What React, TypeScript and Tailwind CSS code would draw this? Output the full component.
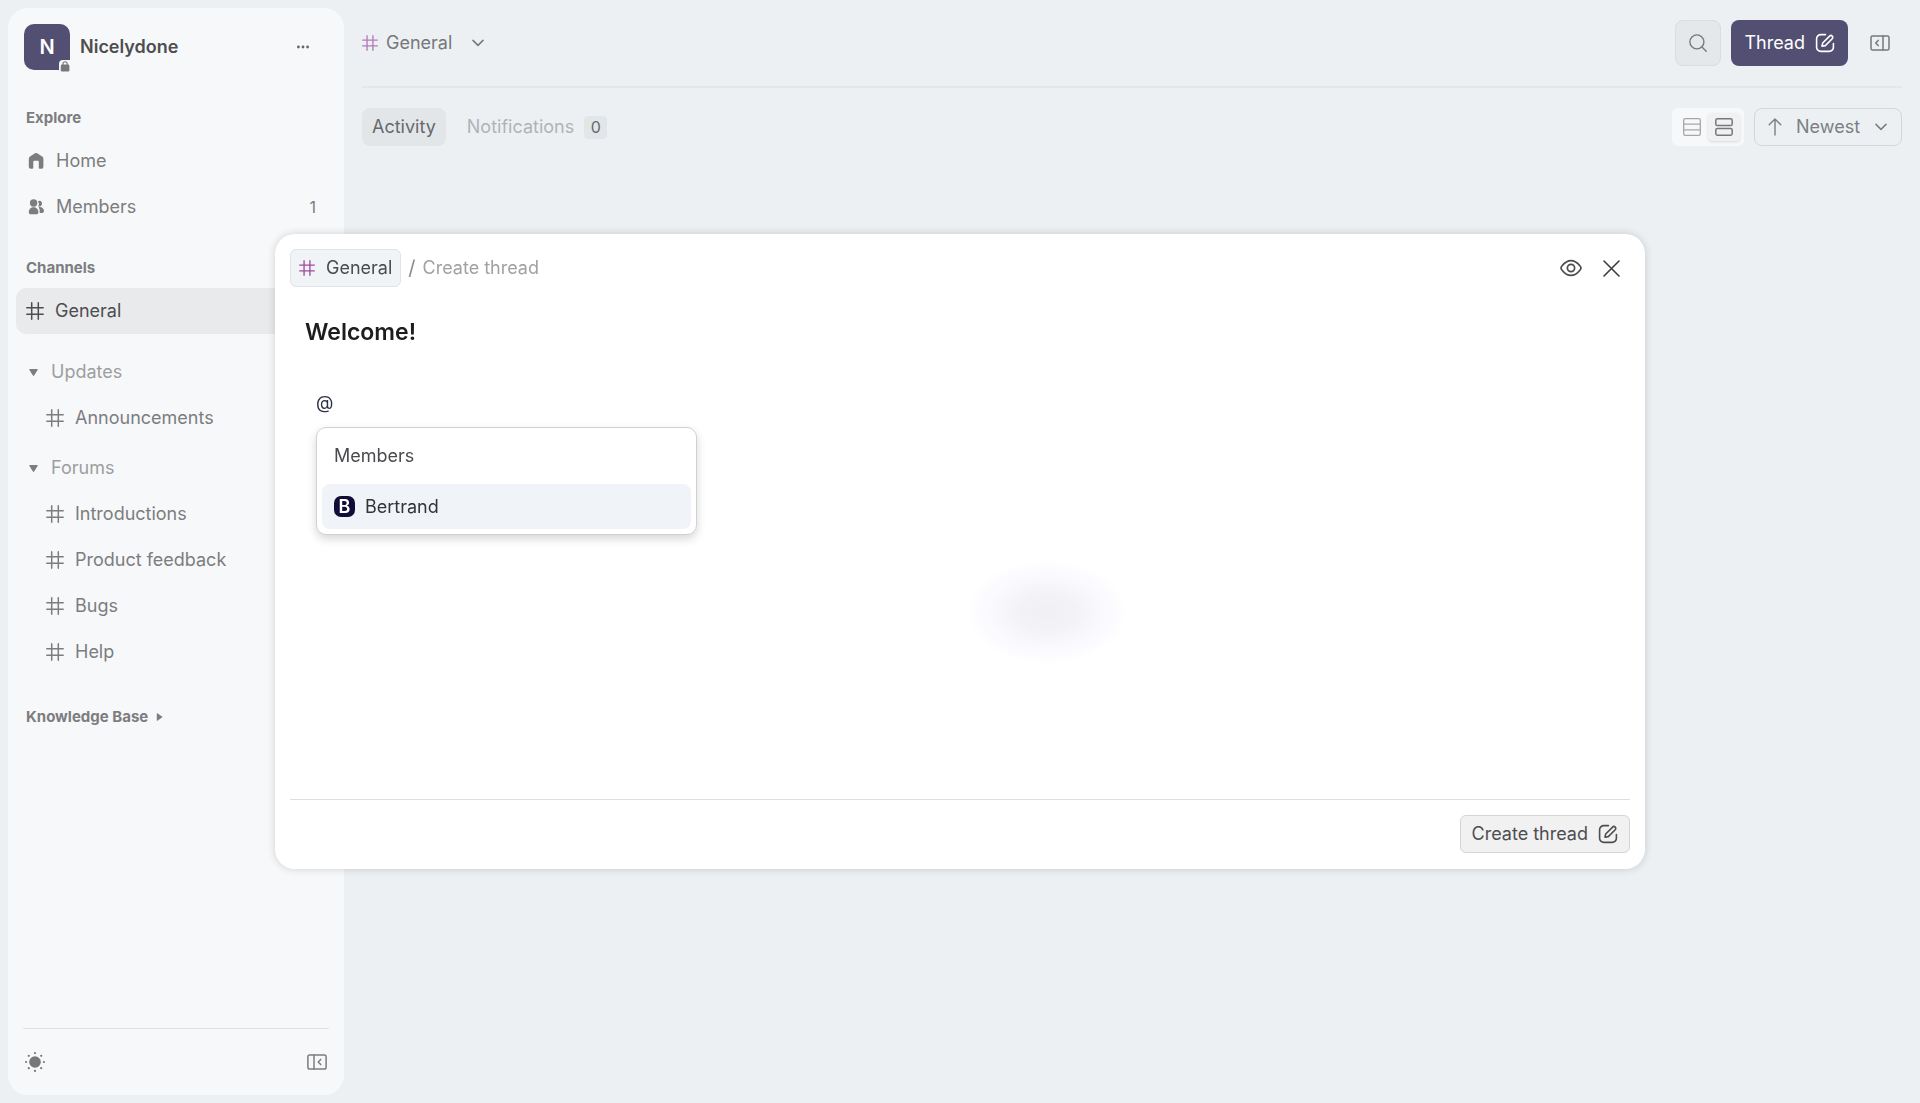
import React, { useState } from 'react';

interface IconProps {
  className?: string;
}

interface ChannelGroup {
  name: string;
  channels: string[];
}

const groups: ChannelGroup[] = [
  { name: 'Updates', channels: ['Announcements'] },
  { name: 'Forums', channels: ['Introductions', 'Product feedback', 'Bugs', 'Help'] },
];

const HashIcon: React.FC<IconProps> = ({ className = '' }) => (
  <svg viewBox="0 0 18 18" fill="none" stroke="currentColor" strokeWidth="1.5" strokeLinecap="round" className={`shrink-0 ${className}`} aria-hidden="true">
    <path d="M5.7 .8v16.4M12.3 .8v16.4M.8 5.7h16.4M.8 12.3h16.4" />
  </svg>
);

const EditIcon: React.FC<IconProps> = ({ className = '' }) => (
  <svg viewBox="0 0 20 20" fill="none" stroke="currentColor" strokeWidth="1.6" strokeLinecap="round" strokeLinejoin="round" className={`size-5 shrink-0 ${className}`} aria-hidden="true">
    <path d="M10.500 1.600H5.800a4.200 4.200 0 0 0-4.200 4.200v8.400a4.200 4.200 0 0 0 4.200 4.200h8.400a4.200 4.200 0 0 0 4.200-4.200v-3.700" />
    <path d="M7 13.200l.7-3.200 6.900-6.900a1.800 1.800 0 0 1 2.600 2.600l-6.900 6.900z" />
  </svg>
);

const PanelLeftIcon: React.FC<IconProps> = ({ className = '' }) => (
  <svg viewBox="0 0 20 16" fill="none" stroke="currentColor" strokeWidth="1.5" strokeLinecap="round" strokeLinejoin="round" className={`h-4 w-5 shrink-0 ${className}`} aria-hidden="true">
    <rect x=".9" y=".9" width="18.2" height="14.2" rx="1.8" />
    <path d="M7 1v14M13.7 5.4l-2.5 2.6 2.5 2.6" />
  </svg>
);

const PanelRightIcon: React.FC<IconProps> = ({ className = '' }) => (
  <svg viewBox="0 0 20 16" fill="none" stroke="currentColor" strokeWidth="1.5" strokeLinecap="round" strokeLinejoin="round" className={`h-4 w-5 shrink-0 ${className}`} aria-hidden="true">
    <rect x="1" y="1" width="18" height="14" rx="1.6" />
    <path d="M13 1v14M8.2 5.4L5.700 8l2.500 2.600" />
  </svg>
);

const ChevronDown: React.FC<IconProps> = ({ className = '' }) => (
  <svg viewBox="0 0 12 8" fill="none" stroke="currentColor" strokeWidth="1.5" strokeLinecap="round" strokeLinejoin="round" className={`h-2 w-3 shrink-0 ${className}`} aria-hidden="true">
    <path d="M1 1.4l5 5 5-5" />
  </svg>
);

const Sidebar: React.FC = () => (
  <aside className="flex w-84 shrink-0 flex-col rounded-[20px] bg-[#f7f8fa] px-2 pt-4 text-[#7c7d7f]">
    <div className="flex items-center pr-[26px] pl-2">
      <div className="relative flex size-[46px] items-center justify-center rounded-[10px] bg-[#524f72] text-xl font-semibold text-white">
        N
        <span className="absolute -right-px -bottom-0.5 flex size-3 items-center justify-center rounded-tl bg-[#f7f8fa] text-[#77787a]">
          <svg viewBox="0 0 10 11" className="h-[11px] w-2.5" aria-hidden="true">
            <rect x=".8" y="3.6" width="8.6" height="7" rx="1.4" fill="currentColor" />
            <path d="M3 4V2.8a2.1 2.1 0 0 1 4.2 0V4" fill="none" stroke="currentColor" strokeWidth="1.1" />
          </svg>
        </span>
      </div>
      <span className="ml-2.5 flex-1 text-lg font-semibold text-[#4d4e50]">Nicelydone</span>
      <button aria-label="Workspace menu" className="text-[#66676a]">
        <svg viewBox="0 0 14 4" fill="currentColor" className="h-1 w-3.5">
          <circle cx="2.4" cy="2" r="1.4" />
          <circle cx="7" cy="2" r="1.4" />
          <circle cx="11.6" cy="2" r="1.4" />
        </svg>
      </button>
    </div>

    <nav className="mt-7 flex flex-col text-lg">
      <h2 className="flex h-10 items-center pl-2.5 text-[15px] font-bold text-[#7c7d7f]">Explore</h2>
      <a href="#home" className="flex h-[46px] items-center gap-[11px] rounded-lg pl-[11px]">
        <svg viewBox="0 0 18 18" fill="currentColor" className="size-[18px]" aria-hidden="true">
          <path d="M8 1.3a2 2 0 0 1 2.2 0l5 3.3a2.6 2.6 0 0 1 1.2 2.2v8a1.9 1.9 0 0 1-1.9 1.9h-1.7a1 1 0 0 1-1-1V10a1.2 1.2 0 0 0-1.2-1.2H7.500A1.200 1.200 0 0 0 6.300 10v5.700a1 1 0 0 1-1 1H3.700a1.900 1.900 0 0 1-1.900-1.900v-8A2.600 2.600 0 0 1 3 4.600z" />
        </svg>
        Home
      </a>
      <a href="#members" className="flex h-[46px] items-center gap-[11px] rounded-lg pr-5 pl-[11px]">
        <svg viewBox="0 0 18 18" fill="currentColor" className="size-[18px]" aria-hidden="true">
          <circle cx="6.600" cy="5" r="3.700" />
          <path d="M6.600 9.200c2.600 0 4.800 1.900 4.800 5 0 1.400-.9 2.100-2.200 2.100H4c-1.300 0-2.200-.7-2.200-2.100 0-3.100 2.200-5 4.800-5z" />
          <path d="M11 2.900a2.900 2.900 0 1 1 .2 5.400 5.200 5.200 0 0 0-.2-5.400zM11.700 9.200c2.900-.6 5.300 1.200 5.300 3.900 0 1.200-.7 1.800-1.900 1.800h-2.400c.2-2-.1-3.900-1-5.700z" />
        </svg>
        <span className="flex-1">Members</span>
        <span className="text-base">1</span>
      </a>

      <h2 className="mt-[18px] flex h-10 items-center pl-2.5 text-[15px] font-bold text-[#7c7d7f]">Channels</h2>
      <a href="#general" aria-current="page" className="flex h-[46px] items-center gap-[11px] rounded-[10px] bg-[#e9eaeb] pl-2.5 text-[#4d4e50]">
        <HashIcon className="size-[18px]" />
        General
      </a>

      <div className="mt-[15px] flex flex-col gap-1">
        {groups.map((group) => (
          <div key={group.name}>
            <button className="flex h-[46px] w-full items-center gap-[13px] pl-[13px] text-left text-[#9d9ea0]">
              <svg viewBox="0 0 9 7" fill="currentColor" className="h-[7px] w-[9px] text-[#7c7d7f]" aria-hidden="true">
                <path d="M.9 0h7.200a.6.600 0 0 1 .5.900L5.100 6.500a.7.700 0 0 1-1.200 0L.4.900A.6.600 0 0 1 .9 0z" />
              </svg>
              {group.name}
            </button>
            {group.channels.map((channel) => (
              <a key={channel} href={`#${channel}`} className="flex h-[46px] items-center gap-[11px] rounded-lg pl-[30px]">
                <HashIcon className="size-[18px]" />
                {channel}
              </a>
            ))}
          </div>
        ))}
      </div>

      <button className="mt-[22px] flex h-10 items-center gap-2 pl-2.5 text-[15px] font-bold text-[#7c7d7f]">
        Knowledge Base
        <svg viewBox="0 0 7 8" fill="currentColor" className="h-2 w-[7px]" aria-hidden="true">
          <path d="M.8.600v6.800a.4.400 0 0 0 .6.300l4.900-3.400a.4.400 0 0 0 0-.6L1.400.3a.4.400 0 0 0-.6.300z" />
        </svg>
      </button>
    </nav>

    <div className="mx-[7px] mt-auto flex h-[67px] items-center justify-between border-t border-[#e0e2e5] px-0.5">
      <button aria-label="Switch theme" className="text-[#77787a]">
        <svg viewBox="0 0 20 20" fill="currentColor" className="size-5">
          <circle cx="10" cy="10" r="5.800" />
          <circle cx="10" cy="1.100" r="1.100" />
          <circle cx="10" cy="18.900" r="1.100" />
          <circle cx="1.100" cy="10" r="1.100" />
          <circle cx="18.900" cy="10" r="1.100" />
          <circle cx="3.800" cy="3.800" r="1.100" />
          <circle cx="16.200" cy="3.800" r="1.100" />
          <circle cx="3.800" cy="16.200" r="1.100" />
          <circle cx="16.200" cy="16.200" r="1.100" />
        </svg>
      </button>
      <button aria-label="Collapse sidebar">
        <PanelLeftIcon />
      </button>
    </div>
  </aside>
);

const Header: React.FC = () => (
  <header className="flex h-20 items-center border-b-2 border-[#e3e7e9] pb-2 text-[#75787b]">
    <button className="flex items-center gap-2 text-lg">
      <HashIcon className="size-4 text-[#b27bb8]" />
      General
      <ChevronDown className="ml-3" />
    </button>
    <div className="ml-auto flex items-center gap-2.5 pr-3">
      <button aria-label="Search" className="flex size-[46px] items-center justify-center rounded-lg border border-[#d9dddf] bg-[#e4e8ea] text-[#77797c]">
        <svg viewBox="0 0 18 18" fill="none" stroke="currentColor" strokeWidth="1.400" strokeLinecap="round" className="size-[18px]">
          <circle cx="7.900" cy="7.900" r="7" />
          <path d="M13 13l4.200 4.200" />
        </svg>
      </button>
      <button className="flex h-[46px] items-center gap-2.5 rounded-lg bg-[#524f72] px-[13px] text-lg text-white">
        Thread
        <EditIcon />
      </button>
      <button aria-label="Toggle details" className="ml-3">
        <PanelRightIcon />
      </button>
    </div>
  </header>
);

const Toolbar: React.FC = () => {
  const [view, setView] = useState('cards');

  return (
    <div className="mt-5 flex items-center text-lg">
      <button className="h-[38px] rounded-lg bg-[#e2e6e8] px-2.5 text-[#66696c]">Activity</button>
      <button className="ml-[11px] flex h-[38px] items-center gap-2.5 px-2.5 text-[#b0b3b6]">
        Notifications
        <span className="flex size-[23px] items-center justify-center rounded bg-[#e2e6e8] text-base text-[#66696c]">0</span>
      </button>

      <div className="ml-auto flex h-[38px] items-center rounded-md bg-[#f7f8fa] px-1">
        <button
          aria-label="List view"
          aria-pressed={view === 'list'}
          onClick={() => setView('list')}
          className={`flex h-7 w-8 items-center justify-center rounded ${view === 'list' ? 'bg-[#eff1f2] text-[#77787a] shadow-sm' : 'text-[#a5a7aa]'}`}
        >
          <svg viewBox="0 0 18 18" fill="none" stroke="currentColor" strokeWidth="1.300" className="size-[18px]">
            <rect x=".7" y=".7" width="16.600" height="16.600" rx="1.400" />
            <path d="M.7 6.200h16.600M.7 11.800h16.600" />
          </svg>
        </button>
        <button
          aria-label="Card view"
          aria-pressed={view === 'cards'}
          onClick={() => setView('cards')}
          className={`flex h-7 w-8 items-center justify-center rounded ${view === 'cards' ? 'bg-[#eff1f2] text-[#77787a] shadow-sm' : 'text-[#a5a7aa]'}`}
        >
          <svg viewBox="0 0 18 18" fill="none" stroke="currentColor" strokeWidth="1.500" className="size-[18px]">
            <rect x=".8" y=".8" width="16.400" height="6.700" rx="1.600" />
            <rect x=".8" y="10.500" width="16.400" height="6.700" rx="1.600" />
          </svg>
        </button>
      </div>

      <div className="relative ml-2.5 flex items-center text-[#7c7f82]">
        <svg viewBox="0 0 14 18" fill="none" stroke="currentColor" strokeWidth="1.400" strokeLinecap="round" strokeLinejoin="round" className="pointer-events-none absolute left-3.5 h-[18px] w-3.5" aria-hidden="true">
          <path d="M7 17V1M1.200 6.800L7 1l5.800 5.800" />
        </svg>
        <select aria-label="Sort order" defaultValue="Newest" className="h-[38px] w-[148px] appearance-none rounded-lg border border-[#d3d7da] bg-transparent pl-[41px] text-lg">
          <option>Newest</option>
          <option>Oldest</option>
        </select>
        <ChevronDown className="pointer-events-none absolute right-[15px]" />
      </div>
    </div>
  );
};

const CreateThread: React.FC = () => {
  const [title, setTitle] = useState('Welcome!');
  const [body, setBody] = useState('@');

  return (
    <div
      role="dialog"
      aria-label="Create thread"
      className="relative flex w-full max-w-[1370px] flex-col rounded-[20px] bg-white px-[15px] pt-[15px] pb-4 text-lg shadow-[0_0_8px_rgba(0,0,0,0.16)]"
    >
      {/* soft glow behind the editor */}
      <div className="pointer-events-none absolute top-[326px] left-[692px] h-26 w-40 bg-[radial-gradient(closest-side,#efeff4,#f2f2f7_35%,#fafaff_75%,#ffffff)]" />

      <div className="relative flex items-center">
        <button className="flex h-[38px] items-center gap-[11px] rounded-md border border-[#dfe4e9] bg-[#f1f4f7] px-2 text-[#4a4b4e]">
          <HashIcon className="size-4 text-[#a04a9e]" />
          General
        </button>
        <span className="ml-[7px] text-xl text-[#8a8b8d]">/</span>
        <span className="ml-[7px] text-[#a0a1a3]">Create thread</span>
        <button aria-label="Preview" className="ml-auto text-[#4a4b4e]">
          <svg viewBox="0 0 22 18" fill="none" stroke="currentColor" strokeWidth="1.700" strokeLinejoin="round" className="h-[18px] w-[22px]">
            <path d="M1 9c0-.8.500-1.500 1.100-2.200C4 4.400 7 1.600 11 1.600s7 2.800 8.900 5.200c.6.700 1.100 1.400 1.100 2.200s-.5 1.500-1.100 2.200c-1.900 2.400-4.900 5.200-8.900 5.200s-7-2.800-8.900-5.200C1.500 10.500 1 9.800 1 9z" />
            <circle cx="11" cy="9" r="3.600" />
          </svg>
        </button>
        <button aria-label="Close" className="mr-2.5 ml-[21px] text-[#3c3d40]">
          <svg viewBox="0 0 17 17" fill="none" stroke="currentColor" strokeWidth="1.600" strokeLinecap="round" className="size-[17px]">
            <path d="M1 1l15 15M16 1L1 16" />
          </svg>
        </button>
      </div>

      <input
        aria-label="Thread title"
        value={title}
        onChange={(e) => setTitle(e.target.value)}
        className="relative mx-[15px] mt-[27px] h-9 bg-transparent text-[23px] font-semibold text-[#1d1d1f] outline-none"
      />

      <div className="relative mx-[26px] mt-[39px]">
        <textarea
          aria-label="Thread content"
          value={body}
          onChange={(e) => setBody(e.target.value)}
          className="block h-[410px] w-full resize-none bg-transparent text-lg leading-7 text-[#2b3245] outline-none"
        />
        <div className="absolute top-[38px] left-0 w-[381px] max-w-full rounded-[10px] border border-[#d0d1d3] bg-white p-[5px] shadow-[0_4px_10px_rgba(0,0,0,0.16)]">
          <div className="mb-[5px] flex h-[46px] items-center px-3 text-[#4a4b4e]">Members</div>
          <button className="flex h-[45px] w-full items-center gap-2.5 rounded-lg bg-[#f0f3f7] px-3 text-[#333438]">
            <span className="flex size-[21px] items-center justify-center rounded-[7px] bg-[#120c38] text-lg font-semibold text-white">B</span>
            Bertrand
          </button>
        </div>
      </div>

      <div className="flex justify-end border-t border-[#dedfe1] pt-[15px]">
        <button className="flex h-[38px] items-center gap-2.5 rounded-md border border-[#d3d4d6] bg-[#f1f1f2] px-[11px] text-[#4d4e50]">
          Create thread
          <EditIcon />
        </button>
      </div>
    </div>
  );
};

const App: React.FC = () => (
  <div className="relative flex min-h-screen bg-[#ecf0f3] p-2 font-['Inter',sans-serif]">
    <Sidebar />
    <main className="min-w-0 flex-1 pr-2.5 pl-[18px]">
      <Header />
      <Toolbar />
    </main>
    <div className="fixed inset-0 flex items-center justify-center">
      <CreateThread />
    </div>
  </div>
);

export default App;
